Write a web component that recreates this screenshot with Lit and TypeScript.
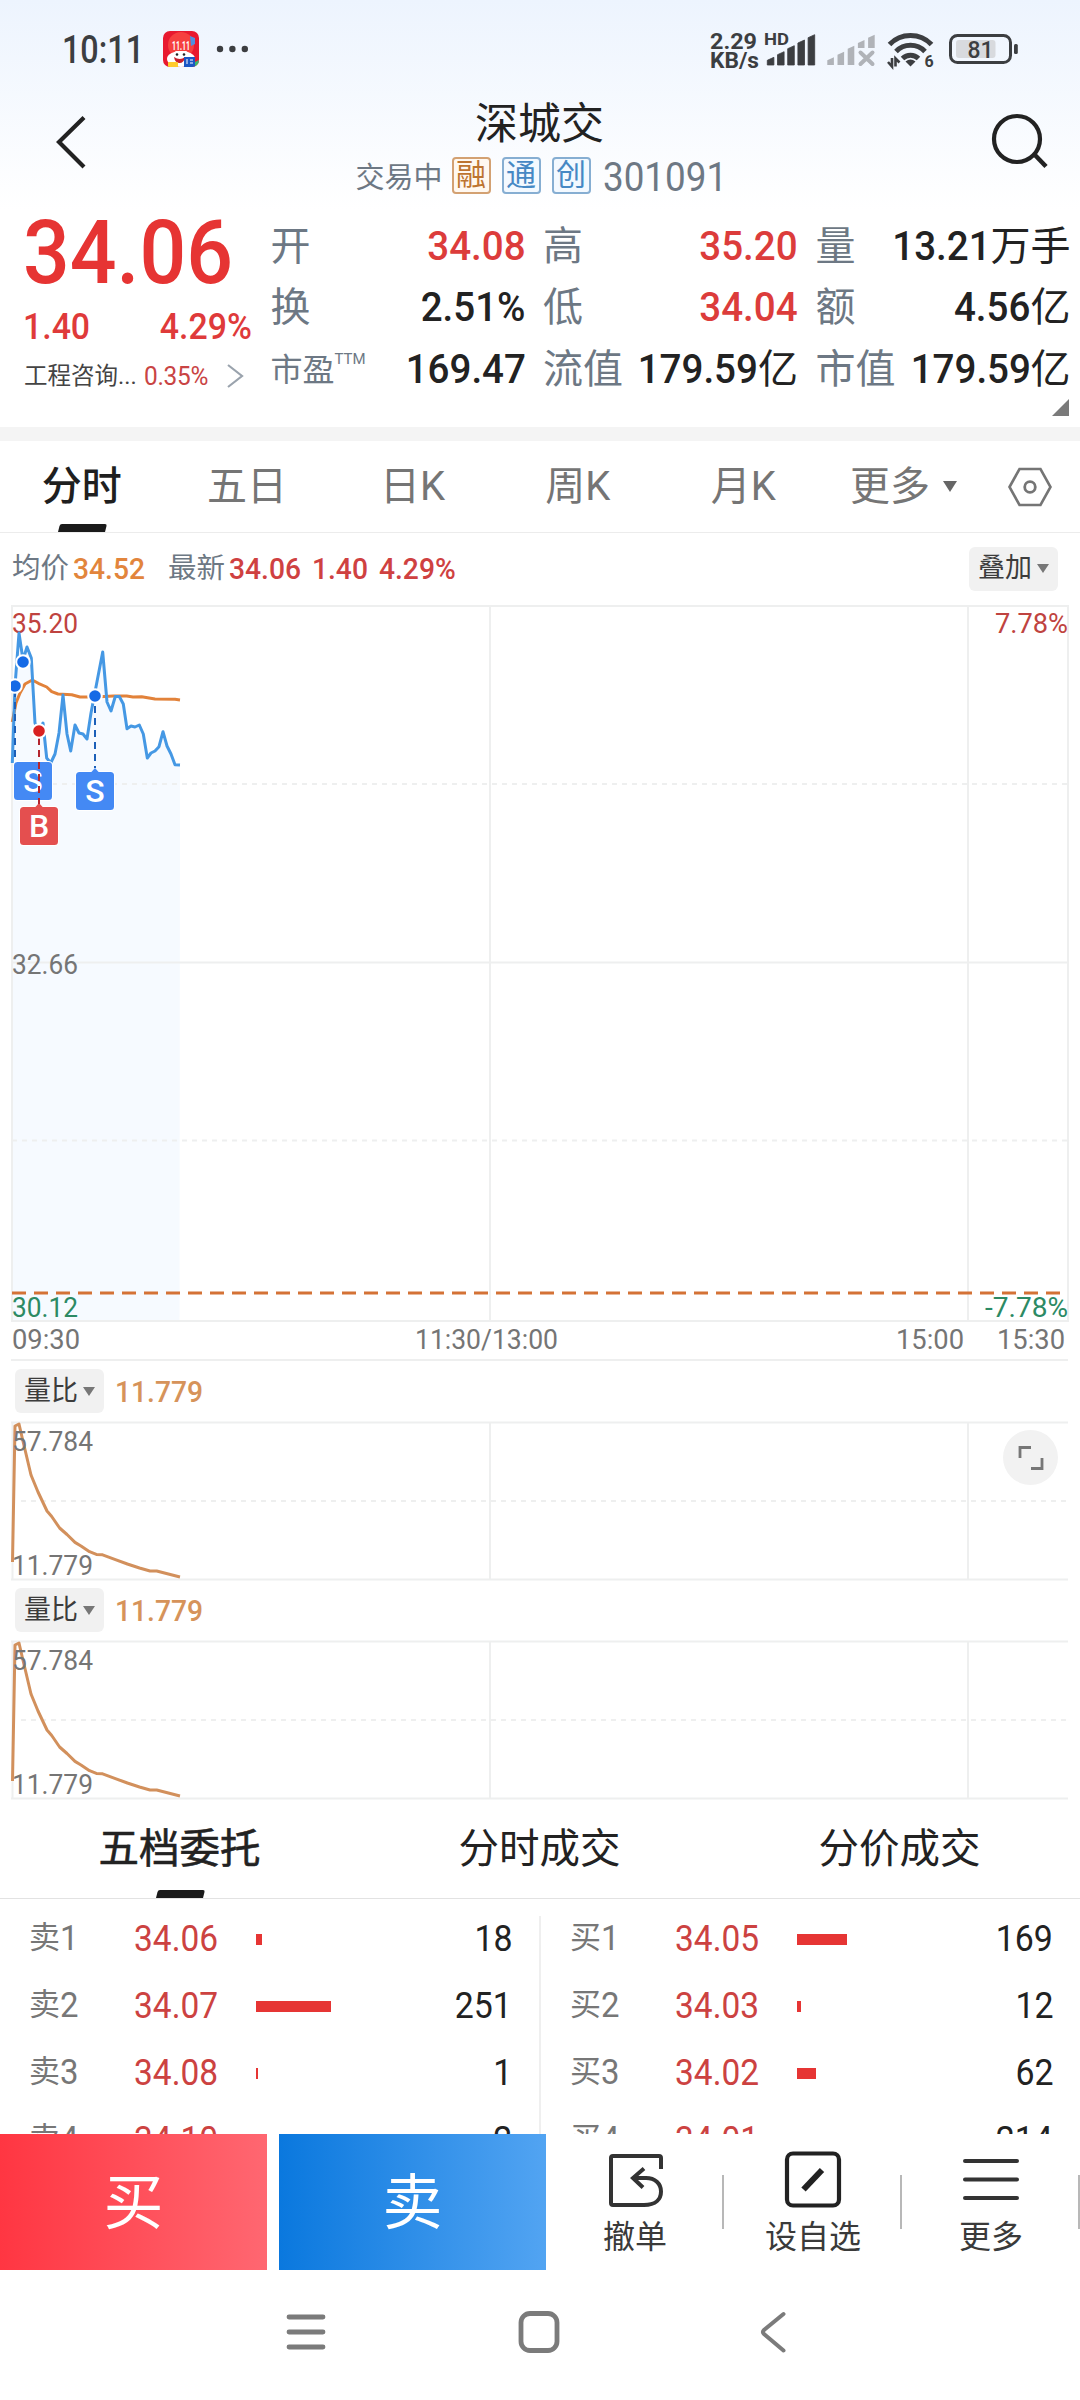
import { LitElement, html, css, svg } from "lit";
import { customElement, property } from "lit/decorators.js";

const PRICE_LINE =
  "12.3,763 15,686 19,633 23,660 27,647 31.3,658 35,723 39,731 43,723 46.7,758 50.7,763 55,754 59,733 63,695 67,734 70.7,751 75,725 79,733 83,734 87,739 91,713 95,692 102.7,652 107,702 111,711 115.3,696.5 119.3,696.5 123.3,704 127,728.7 131,726 135,727 139.3,725 143.3,734 147.3,758 151,753 155,751 159,746.7 163,731.7 167,746 171,754 175,764.7 180,765";
const AVERAGE_LINE =
  "12.3,722 16,703 20,693 25,684 32.3,680 38.3,683.3 46.7,687 51.7,691.7 58,694 71.7,694.7 80,697 95,697 113.3,696 126.7,696 133,697 141.7,696.7 155,699 175,699.3 180,700";
const RATIO_LINE =
  "12.5,141 15,5 19,3 22,16 25.8,32 31,54 38,71 47,90 51.7,95.5 59.6,107 67,113.5 75,121.4 81,125 89.5,130.7 96.4,133.4 102.6,133.8 115.4,138.6 127.4,143 139.5,147 150,150 156.7,150 180,156";

const FONT = css`
  :host {
    display: block;
    font-family: Roboto, "Noto Sans CJK SC", sans-serif;
    box-sizing: border-box;
  }
  svg {
    display: block;
    overflow: visible;
  }
  text {
    font-family: Roboto, "Noto Sans CJK SC", sans-serif;
  }
  .narrow {
    display: inline-block;
    transform: scaleX(0.94);
    transform-origin: left;
  }
  .narrow-end {
    display: inline-block;
    transform: scaleX(0.94);
    transform-origin: right;
  }
`;

@customElement("status-bar")
class StatusBar extends LitElement {
  static styles = [
    FONT,
    css`
      :host {
        height: 97px;
      }
      .time,
      .rate,
      .small {
        fill: #3c3e41;
      }
      .time {
        font-size: 39px;
        font-weight: 500;
      }
      .rate {
        font-size: 22px;
        font-weight: 700;
      }
      .small {
        font-size: 16px;
        font-weight: 700;
      }
      .battery {
        font-size: 24px;
        font-weight: 500;
        fill: #3c3e41;
      }
    `,
  ];

  render() {
    const tops = [57.3, 51.7, 45.7, 40, 34.7];
    return html`<svg width="1080" height="97" viewBox="0 0 1080 97">
      <text class="time" x="62" y="63" textLength="82" lengthAdjust="spacingAndGlyphs">10:11</text>
      <clipPath id="app"><rect x="163" y="31" width="36" height="36" rx="7" /></clipPath>
      <g clip-path="url(#app)">
        <rect x="163" y="31" width="36" height="36" fill="#e8192f" />
        <circle cx="181" cy="45" r="13" fill="#f6403f" />
        <path d="M190 36l5 2v6l-4 2z" fill="#4f8fe0" />
        <ellipse cx="181" cy="59" rx="14" ry="8" fill="#fff" />
        <path d="M173 54l3-3h10l4 3v9h-17z" fill="#fff" />
        <text x="172" y="50" font-size="13" font-weight="700" fill="#fff" textLength="18" lengthAdjust="spacingAndGlyphs">11.11</text>
        <circle cx="177" cy="54.500" r="1.3" fill="#222" />
        <circle cx="184" cy="54.500" r="1.3" fill="#222" />
        <path d="M174 57q6 4 11 0q-1 6-5.500 6t-5.500-6z" fill="#c9202c" />
        <rect x="168" y="62" width="10" height="6" rx="1" fill="#ffcb2e" />
        <rect x="184" y="57" width="11" height="10" fill="#1c57c4" />
        <path d="M187 59v5M190 60h3M190 63h3" stroke="#fff" />
        <path d="M195 62l4-2v7h-4z" fill="#3fb56a" />
      </g>
      <g fill="#3c3e41">
        <circle cx="220" cy="49" r="3.2" />
        <circle cx="232.400" cy="49" r="3.2" />
        <circle cx="244.800" cy="49" r="3.2" />
      </g>
      <text class="rate" x="710" y="49" textLength="47" lengthAdjust="spacingAndGlyphs">2.29</text>
      <text class="rate" x="710" y="67.500" textLength="49" lengthAdjust="spacingAndGlyphs">KB/s</text>
      <text class="small" x="764" y="45" textLength="25" lengthAdjust="spacingAndGlyphs">HD</text>
      ${tops.map((t, i) => {
        const x = 767.3 + i * 10.2;
        return svg`<path d="M${x} 65V${t + 3}L${x + 6.6} ${t}V65z" fill="#3c3e41" stroke="#3c3e41" stroke-width=".8" stroke-linejoin="round"/>`;
      })}
      ${tops.map((t, i) => {
        const x = 827.3 + i * 10.2;
        const b = i > 2 ? 48 : 65;
        return svg`<path d="M${x} ${b}V${t + 3}L${x + 6.6} ${t}V${b}z" fill="#b0b3b8"/>`;
      })}
      <path d="M860.500 52.500l12 11.500M872.500 52.500l-12 11.500" stroke="#b0b3b8" stroke-width="4" stroke-linecap="round" />
      <g fill="none" stroke="#3c3e41" stroke-width="5">
        <path d="M889.500 44.500a29 29 0 0 1 42 0" />
        <path d="M896 51.500a20 20 0 0 1 29 0" />
        <path d="M902.500 58.500a11.500 11.500 0 0 1 16 0" />
      </g>
      <path d="M905.500 61.500q5-4 10 0l-5 5z" fill="#3c3e41" />
      <path d="M888 62l4 4.500V58M895.500 66.500V58.500l4 4" fill="none" stroke="#3c3e41" stroke-width="2.600" />
      <text class="small" x="924.500" y="67">6</text>
      <rect x="950.500" y="35.500" width="60" height="27" rx="7" fill="none" stroke="#3c3e41" stroke-width="3" />
      <rect x="956" y="40" width="39.500" height="18" rx="3" fill="#d8dade" />
      <rect x="1014" y="44" width="3.800" height="10" rx="1.500" fill="#3c3e41" />
      <text class="battery" x="967.500" y="58" textLength="26" lengthAdjust="spacingAndGlyphs">81</text>
    </svg>`;
  }
}

@customElement("quote-header")
class QuoteHeader extends LitElement {
  static styles = [
    FONT,
    css`
      .title {
        display: flex;
        justify-content: space-between;
        height: 110px;
        padding: 0 33px 0 55px;
      }
      .icon {
        margin-top: 14px;
      }
      .names {
        display: flex;
        flex-direction: column;
        align-items: center;
        margin-right: 3px;
      }
      .name {
        font-size: 43px;
        line-height: 51px;
        height: 51px;
        padding-top: 1.500px;
        box-sizing: border-box;
        color: #222;
      }
      .sub {
        display: flex;
        align-items: center;
        height: 60px;
        margin-left: -1px;
        color: #6d7884;
        font-size: 29px;
        line-height: 60px;
      }
      .badges {
        display: flex;
        gap: 11px;
        margin: -6px 12px 0 9px;
      }
      .badge {
        width: 39px;
        height: 37px;
        box-sizing: border-box;
        border: 2px solid #86aed2;
        border-radius: 4px;
        background: #f3f9ff;
        color: #4688c4;
        font-size: 30px;
        line-height: 31px;
        text-align: center;
      }
      .warm {
        border-color: #d3a172;
        background: #fff8f0;
        color: #bd7430;
      }
      .code {
        font-size: 40px;
        width: 120px;
        transform: scaleX(0.92);
        transform-origin: left;
      }
      .quote {
        display: flex;
        height: 220px;
      }
      .left {
        width: 270.500px;
        box-sizing: border-box;
        padding-left: 23px;
        color: #df3a3a;
      }
      .price {
        height: 92px;
        line-height: 92px;
        font-size: 89px;
        font-weight: 500;
        color: #e63433;
        transform: scaleX(0.925);
        transform-origin: left;
      }
      .change {
        display: flex;
        justify-content: space-between;
        width: 229px;
        line-height: 57px;
        height: 56px;
        font-size: 36px;
        font-weight: 500;
      }
      .sector {
        display: flex;
        align-items: center;
        line-height: 42px;
        height: 42px;
        padding-left: 1px;
      }
      .sector-name {
        font-size: 23.500px;
        color: #444;
        width: 120px;
        white-space: nowrap;
      }
      .sector-rate {
        font-size: 26px;
        letter-spacing: -0.3px;
        width: 83px;
        flex: none;
        color: #c94444;
      }
      .stats {
        display: grid;
        grid-template-columns: 255px 255px 255px;
        grid-auto-rows: 61.300px;
        column-gap: 17.500px;
        padding-top: 9px;
      }
      .stat {
        display: flex;
        justify-content: space-between;
        line-height: 61px;
        font-size: 40px;
        white-space: nowrap;
      }
      .label {
        color: #6d7884;
      }
      .value {
        font-weight: 500;
        font-size: 41px;
        color: #222;
        display: flex;
      }
      .unit {
        font-weight: 400;
        font-size: 40px;
      }
      .up {
        color: #dc3c3b;
      }
      .minor {
        font-size: 32px;
      }
      .ttm {
        font-size: 15px;
        line-height: 0;
        vertical-align: 17px;
      }
      .pe {
        display: inline-block;
        transform: translateY(-2px);
      }
      .corner {
        position: absolute;
        left: 1052px;
        top: 399px;
      }
    `,
  ];

  private stat(label: unknown, value: string, unit = "", up = false) {
    return html`<div class="stat">
      <span class="label">${label}</span>
      <span class="value ${up ? "up" : ""}"><span class="narrow-end">${value}</span><span class="unit">${unit}</span></span>
    </div>`;
  }

  render() {
    return html`
      <div class="title">
        <svg class="icon" width="40" height="64" viewBox="55 111 40 64">
          <path d="M84 117.500L59 142l25 25" fill="none" stroke="#222" stroke-width="4.200" />
        </svg>
        <div class="names">
          <div class="name">深城交</div>
          <div class="sub">
            <span>交易中</span>
            <span class="badges">
              <span class="badge warm">融</span><span class="badge">通</span><span class="badge">创</span>
            </span>
            <span class="code">301091</span>
          </div>
        </div>
        <svg class="icon" width="60" height="64" viewBox="987 111 60 64">
          <circle cx="1017" cy="139" r="23" fill="none" stroke="#222" stroke-width="4.200" />
          <path d="M1034 154l12 12.500" stroke="#222" stroke-width="4.500" />
        </svg>
      </div>
      <div class="quote">
        <div class="left">
          <div class="price">34.06</div>
          <div class="change"><span class="narrow">1.40</span><span class="narrow-end">4.29%</span></div>
          <div class="sector">
            <span class="sector-name">工程咨询...</span>
            <span class="sector-rate narrow">0.35%</span>
            <svg width="16" height="24" viewBox="0 0 16 24">
              <path d="M1 1l14 11L1 23" fill="none" stroke="#9aa3ad" stroke-width="2.200" />
            </svg>
          </div>
        </div>
        <div class="stats">
          ${this.stat("开", "34.08", "", true)} ${this.stat("高", "35.20", "", true)}
          ${this.stat("量", "13.21", "万手")} ${this.stat("换", "2.51%")}
          ${this.stat("低", "34.04", "", true)} ${this.stat("额", "4.56", "亿")}
          ${this.stat(html`<span class="pe"><span class="minor">市盈</span><span class="ttm">TTM</span></span>`, "169.47")}
          ${this.stat("流值", "179.59", "亿")} ${this.stat("市值", "179.59", "亿")}
        </div>
      </div>
      <svg class="corner" width="17" height="17"><path d="M17 0v17H0z" fill="#7a7a7a" /></svg>
    `;
  }
}

@customElement("period-tabs")
class PeriodTabs extends LitElement {
  static styles = [
    FONT,
    css`
      :host {
        display: flex;
        height: 106px;
        border-top: 14px solid #f4f4f4;
        border-bottom: 1px solid #ececec;
        color: #757575;
        font-size: 40px;
        line-height: 92px;
      }
      .tab {
        width: 165.400px;
        text-align: center;
        text-indent: -2px;
      }
      .active {
        display: flex;
        flex-direction: column;
        align-items: center;
        height: 91px;
        font-weight: 500;
        color: #1f1f1f;
      }
      .mark {
        width: 47px;
        height: 8px;
        margin-top: -9px;
        background: #1a1a1a;
        transform: skewX(-14deg);
        border-radius: 2px 2px 0 0;
        flex: none;
      }
      .more {
        display: flex;
        align-items: center;
        gap: 13px;
        width: 158px;
        padding-left: 23px;
      }
      .gear {
        margin-top: 24.500px;
      }
    `,
  ];
  render() {
    return html`
      <div class="tab active">分时<span class="mark"></span></div>
      ${["五日", "日K", "周K", "月K"].map((t) => html`<div class="tab">${t}</div>`)}
      <div class="more">
        更多<svg width="14" height="11"><path d="M0 0h14L7 11z" fill="#666" /></svg>
      </div>
      <svg class="gear" width="44" height="42" viewBox="-22 -21 44 42">
        <path d="M-20.500 0L-10.500-18h21L20.500 0 10.500 18h-21z" fill="none" stroke="#757575" stroke-width="2.600" />
        <circle r="5.300" fill="none" stroke="#757575" stroke-width="2.800" />
      </svg>
    `;
  }
}

@customElement("drop-chip")
class DropChip extends LitElement {
  @property() label = "";
  static styles = [
    FONT,
    css`
      :host {
        display: flex;
        align-items: center;
        justify-content: center;
        gap: 5px;
        width: 89px;
        height: 44px;
        border-radius: 6px;
        background: #f1f1f1;
        color: #3c3c3c;
        font-size: 27px;
        line-height: 45px;
      }
    `,
  ];
  render() {
    return html`${this.label}<svg width="12" height="9"><path d="M0 0h12L6 9z" fill="#777" /></svg>`;
  }
}

@customElement("price-chart")
class PriceChart extends LitElement {
  static styles = [
    FONT,
    css`
      .axis {
        font-size: 28px;
        fill: #757575;
      }
      .up {
        fill: #bf4340;
      }
      .down {
        fill: #2c8a64;
      }
      .grid {
        fill: none;
        stroke: #eeefef;
        stroke-width: 2;
      }
      .flag {
        font-size: 32px;
        font-weight: 500;
        fill: #fff;
        text-anchor: middle;
      }
    `,
  ];

  private label(x: number, baseline: number, width: number, value: string, tone = "") {
    return svg`<text class="axis ${tone}" x=${x} y=${baseline} textLength=${width} lengthAdjust="spacingAndGlyphs">${value}</text>`;
  }

  private flag(x: number, y: number, letter: string, color: string, pointer: boolean) {
    return svg`
      <rect x=${x} y=${y} width="38" height="38" rx="3.500" fill=${color} stroke="#fff" stroke-width="2" paint-order="stroke"/>
      ${pointer ? svg`<path d="M${x + 14.5} ${y + 1}l4.500-5 4.500 5z" fill=${color}/>` : ""}
      <text class="flag" x=${x + 19} y=${y + 30}>${letter}</text>`;
  }

  render() {
    return html`<svg width="1080" height="757" viewBox="0 604 1080 757">
      <path d="M12 1321V763L${PRICE_LINE} 179.500,1321z" fill="#f6faff" />
      <path class="grid" d="M11 606H1068V1321H12V606M490 606V1321M968 606V1321M12 962.500H1068M11 1360H1068" />
      <path class="grid" d="M12 784H1068M12 1140.500H1068" stroke-dasharray="5 5" />
      ${this.label(12, 633, 66, "35.20", "up")} ${this.label(995, 633, 73, "7.78%", "up")}
      ${this.label(12, 974, 66, "32.66")}
      <polyline points=${AVERAGE_LINE} fill="none" stroke="#e2823a" stroke-width="3" stroke-linejoin="round" />
      <polyline points=${PRICE_LINE} fill="none" stroke="#4598e4" stroke-width="3" stroke-linejoin="round" />
      <path d="M12 1293H1063" stroke="#d47236" stroke-width="3.200" stroke-dasharray="14 8" />
      ${this.label(12, 1317, 66, "30.12", "down")} ${this.label(985, 1317, 83, "-7.78%", "down")}
      ${this.label(12, 1349, 68, "09:30")} ${this.label(415, 1349, 143, "11:30/13:00")}
      ${this.label(896, 1349, 68, "15:00")} ${this.label(997, 1349, 68, "15:30")}
      <path d="M15 690V762M95 706V768" stroke="#1c5fb8" stroke-width="2" stroke-dasharray="7 5" />
      ${this.flag(14, 762, "S", "#4489f4", false)} ${this.flag(76, 772, "S", "#4489f4", true)}
      ${this.flag(20, 807, "B", "#e44f4f", true)}
      <path d="M39 738V804" stroke="#b3252f" stroke-width="2" stroke-dasharray="7 5" />
      <clipPath id="plot"><path d="M11 600H1068V1321H11z" /></clipPath>
      <g stroke="#fff" stroke-width="2" clip-path="url(#plot)">
        <circle cx="23" cy="662" r="6.800" fill="#156ae6" />
        <circle cx="15" cy="686" r="6.800" fill="#156ae6" />
        <circle cx="95" cy="696" r="6.800" fill="#156ae6" />
        <circle cx="39" cy="731" r="6.800" fill="#d92121" />
      </g>
    </svg>`;
  }
}

@customElement("ratio-panel")
class RatioPanel extends LitElement {
  @property({ type: Boolean }) expandable = false;
  static styles = [
    FONT,
    css`
      :host {
        height: 219px;
        position: relative;
      }
      .head {
        display: flex;
        align-items: center;
        gap: 11px;
        height: 60px;
        padding-left: 15px;
      }
      .value {
        font-size: 30px;
        font-weight: 500;
        color: #d6935a;
      }
      .axis {
        font-size: 28px;
        fill: #757575;
      }
      .grid {
        fill: none;
        stroke: #eeefef;
        stroke-width: 2;
      }
      .expand {
        position: absolute;
        left: 1003px;
        top: 69px;
      }
    `,
  ];
  render() {
    return html`
      <div class="head"><drop-chip label="量比"></drop-chip><span class="value narrow">11.779</span></div>
      <svg width="1080" height="159" viewBox="0 0 1080 159">
        <path class="grid" d="M11 1.500H1068M11 158.500H1068M12.500 1V158.500M490 1V158.500M968 1V158.500" />
        <path class="grid" d="M21 80H1068" stroke-dasharray="5 5" />
        <polyline points=${RATIO_LINE} fill="none" stroke="#d2905c" stroke-width="3" stroke-linejoin="round" />
        <text class="axis" x="12" y="30" textLength="81" lengthAdjust="spacingAndGlyphs">57.784</text>
        <text class="axis" x="12" y="154" textLength="81" lengthAdjust="spacingAndGlyphs">11.779</text>
      </svg>
      ${this.expandable
        ? html`<svg class="expand" width="55" height="55" viewBox="0 0 55 55">
            <circle cx="27.500" cy="27.500" r="27.500" fill="#f2f2f2" />
            <path d="M17 28V17.500h11M39 28v10.500H28" fill="none" stroke="#777" stroke-width="2.800" />
          </svg>`
        : ""}
    `;
  }
}

interface Level {
  side: string;
  level: number;
  price: string;
  bar: number;
  volume: number;
}

const SELLS: Level[] = [
  { side: "卖", level: 1, price: "34.06", bar: 6, volume: 18 },
  { side: "卖", level: 2, price: "34.07", bar: 75, volume: 251 },
  { side: "卖", level: 3, price: "34.08", bar: 2, volume: 1 },
  { side: "卖", level: 4, price: "34.10", bar: 0, volume: 2 },
];
const BUYS: Level[] = [
  { side: "买", level: 1, price: "34.05", bar: 50, volume: 169 },
  { side: "买", level: 2, price: "34.03", bar: 4, volume: 12 },
  { side: "买", level: 3, price: "34.02", bar: 19, volume: 62 },
  { side: "买", level: 4, price: "34.01", bar: 0, volume: 214 },
];

@customElement("order-book")
class OrderBook extends LitElement {
  static styles = [
    FONT,
    css`
      :host {
        height: 335px;
        overflow: hidden;
      }
      .tabs {
        display: grid;
        grid-template-columns: repeat(3, 1fr);
        height: 100px;
        border-bottom: 1px solid #e2e2e2;
        font-size: 40.500px;
        line-height: 101px;
        text-align: center;
        text-indent: -1px;
        color: #222;
        box-sizing: border-box;
      }
      .active {
        display: flex;
        flex-direction: column;
        align-items: center;
        -webkit-text-stroke: 0.6px #222;
      }
      .mark {
        flex: none;
        width: 47px;
        height: 8px;
        margin-top: -10px;
        background: #1a1a1a;
        transform: skewX(-14deg);
        border-radius: 2px 2px 0 0;
      }
      .book {
        display: grid;
        grid-template-columns: 541px 541px;
        background: linear-gradient(#efefef, #efefef) 539px 17px / 2px 100% no-repeat;
        padding-top: 6.500px;
      }
      .row {
        display: flex;
        align-items: center;
        height: 67px;
        line-height: 68px;
        padding: 0 29px 0 29px;
        font-size: 36px;
      }
      .side {
        display: flex;
        width: 105px;
        color: #777;
        font-size: 35px;
      }
      .glyph {
        font-size: 31px;
        line-height: 66px;
      }
      .price {
        width: 122px;
        flex: none;
        color: #cc4241;
      }
      .price span {
        transform: scaleX(0.93);
      }
      .track {
        flex: 1;
        padding-top: 1px;
      }
      .bar {
        height: 11px;
        background: #e63534;
      }
      .volume {
        color: #222;
      }
    `,
  ];

  private side(levels: Level[]) {
    return html`<div>
      ${levels.map(
        (l) => html`<div class="row">
          <span class="side"><span class="glyph">${l.side}</span><span class="narrow">${l.level}</span></span>
          <span class="price"><span class="narrow">${l.price}</span></span>
          <span class="track"><div class="bar" style="width:${l.bar}px"></div></span>
          <span class="volume narrow-end">${l.volume}</span>
        </div>`
      )}
    </div>`;
  }

  render() {
    return html`
      <div class="tabs">
        <div class="active">五档委托<span class="mark"></span></div>
        <div>分时成交</div>
        <div>分价成交</div>
      </div>
      <div class="book">${this.side(SELLS)}${this.side(BUYS)}</div>
    `;
  }
}

@customElement("action-bar")
class ActionBar extends LitElement {
  static styles = [
    FONT,
    css`
      :host {
        display: flex;
        height: 136px;
        background: #fff;
      }
      .trade {
        width: 267px;
        height: 136px;
        color: #fff;
        font-size: 60px;
        line-height: 140px;
        text-align: center;
      }
      .buy {
        margin-right: 12px;
        background: linear-gradient(90deg, #ff3642, #ff6771);
      }
      .sell {
        background: linear-gradient(90deg, #0a78de, #52a4f2);
      }
      .tool {
        display: flex;
        flex-direction: column;
        align-items: center;
        width: 178px;
        padding-top: 16px;
        box-sizing: border-box;
        font-size: 32px;
        line-height: 50px;
        color: #3a3a3a;
        background: linear-gradient(#b8b8b8, #b8b8b8) 176px 41px / 2px 54px no-repeat;
      }
      .tool svg {
        margin-bottom: 2px;
      }
    `,
  ];
  render() {
    return html`
      <div class="trade buy">买</div>
      <div class="trade sell">卖</div>
      <div class="tool">
        <svg width="58" height="60" viewBox="606 2150 58 60" fill="none" stroke="#333" stroke-width="4">
          <path d="M661 2169v-11q0-2-2-2h-46q-2 0-2 2v45q0 2 2 2h31c12 0 17-6 17-13.500 0-8-6-13.500-15-13.500h-12" />
          <path d="M644 2168.500l-11 9.500 10 9.500" />
        </svg>
        撤单
      </div>
      <div class="tool">
        <svg width="58" height="60" viewBox="784 2150 58 60" fill="none" stroke="#222">
          <rect x="787" y="2153.500" width="52" height="52" rx="6" stroke-width="4.200" />
          <path d="M803.500 2189.500L822 2170" stroke-width="6" />
        </svg>
        设自选
      </div>
      <div class="tool">
        <svg width="58" height="60" viewBox="0 0 58 60" stroke="#333" stroke-width="4" stroke-linecap="round">
          <path d="M3 11h52M3 29.500h52M3 48h52" />
        </svg>
        更多
      </div>
    `;
  }
}

@customElement("app-root")
class AppRoot extends LitElement {
  static styles = [
    FONT,
    css`
      :host {
        width: 1080px;
        height: 2400px;
        overflow: hidden;
        position: relative;
        background: linear-gradient(#edf4fe, #fff 210px) #fff;
      }
      .info {
        display: flex;
        align-items: center;
        height: 71px;
        padding: 0 22px 0 12px;
        font-size: 28.500px;
        line-height: 72px;
        color: #6d7884;
      }
      .num {
        font-size: 30px;
        font-weight: 500;
        color: #cf4141;
      }
      .avg {
        color: #e2853c;
        width: 95px;
      }
      .lead {
        margin-left: 4px;
      }
      .last {
        width: 83px;
      }
      .diff {
        width: 67px;
      }
      drop-chip.overlay {
        margin-left: auto;
      }
      .nav {
        margin-top: 40px;
      }
    `,
  ];
  render() {
    return html`
      <status-bar></status-bar>
      <quote-header></quote-header>
      <period-tabs></period-tabs>
      <div class="info">
        <span>均价</span><span class="num narrow lead avg">34.52</span>
        <span>最新</span><span class="num narrow lead last">34.06</span>
        <span class="num narrow diff">1.40</span><span class="num narrow">4.29%</span>
        <drop-chip class="overlay" label="叠加"></drop-chip>
      </div>
      <price-chart></price-chart>
      <ratio-panel expandable></ratio-panel>
      <ratio-panel></ratio-panel>
      <order-book></order-book>
      <action-bar></action-bar>
      <svg class="nav" width="1080" height="44" viewBox="0 2310 1080 44" fill="none" stroke="#7b7b7b" stroke-width="4.800" stroke-linecap="round">
        <path d="M289 2317h34M289 2332h34M289 2347h34" />
        <rect x="521" y="2313.500" width="36" height="37" rx="9" />
        <path d="M783.500 2314L764 2330q-2 2 0 4l19.500 16.500" stroke-width="4" />
      </svg>
    `;
  }
}
